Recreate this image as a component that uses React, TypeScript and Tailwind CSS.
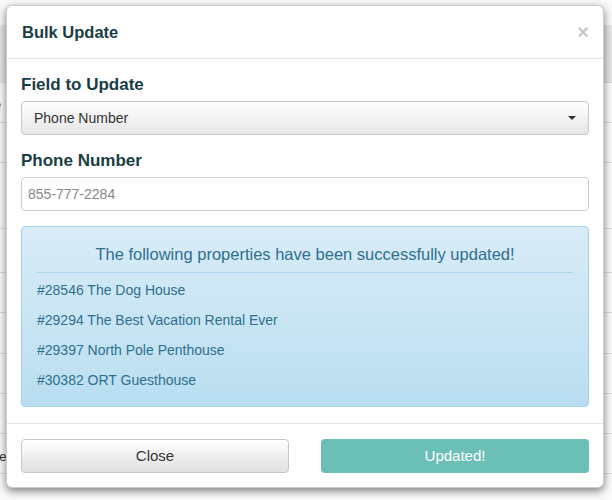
import React from "react";

const properties = [
  "#28546 The Dog House",
  "#29294 The Best Vacation Rental Ever",
  "#29397 North Pole Penthouse",
  "#30382 ORT Guesthouse",
];

const rowLines = [82, 122, 162, 228, 272, 312, 353, 393, 433, 473];

export default function App() {
  return (
    <div
      className="relative h-[500px] w-[612px] overflow-hidden bg-[#fafafa]"
      style={{ fontFamily: '"Liberation Sans", Arial, sans-serif' }}
    >
      {/* page behind the modal */}
      <div className="absolute left-0 right-0 top-[25px] h-[57px] bg-[#e6e6e6]" />
      {rowLines.map((y) => (
        <div
          key={y}
          className="absolute left-0 right-0 h-px bg-[#dcdcdc]"
          style={{ top: y }}
        />
      ))}
      <span className="absolute left-[-6px] top-[95px] text-[13px] text-[#555]">
        e
      </span>
      <span className="absolute left-[-8px] top-[447px] text-[13px] text-[#333]">
        be
      </span>

      {/* modal */}
      <div className="absolute left-[6px] top-[5px] flex h-[483px] w-[598px] flex-col rounded-[6px] border border-black/20 bg-white shadow-[0_3px_9px_rgba(0,0,0,0.5)]">
        <div className="flex h-[53px] items-center justify-between border-b border-[#e5e5e5] pl-[15px] pr-[14px]">
          <h3 className="text-[16.5px] font-bold text-[#1a3d44]">Bulk Update</h3>
          <span className="text-[20px] font-bold leading-none text-[#c8c8c8]">
            ×
          </span>
        </div>

        <div className="flex flex-col px-[14px] pt-[16px]">
          <label className="text-[17px] font-bold leading-[20px] text-[#1a3d44]">
            Field to Update
          </label>
          <div className="mt-[6px] flex h-[34px] items-center justify-between rounded-[4px] border border-[#c8c8c8] bg-gradient-to-b from-white to-[#e6e6e6] pl-[12px] pr-[12px]">
            <span className="text-[14px] text-[#333]">Phone Number</span>
            <span className="h-0 w-0 border-x-[4px] border-t-[4px] border-x-transparent border-t-[#333]" />
          </div>

          <label className="mt-[16px] text-[17px] font-bold leading-[20px] text-[#1a3d44]">
            Phone Number
          </label>
          <div className="mt-[6px] flex h-[34px] items-center rounded-[4px] border border-[#cccccc] bg-white pl-[6px]">
            <span className="text-[14px] text-[#888]">855-777-2284</span>
          </div>

          <div className="mt-[15px] flex h-[181px] flex-col rounded-[4px] border border-[#9fd3ee] bg-gradient-to-b from-[#d9ecf7] to-[#b9def0] px-[15px] pt-[16px]">
            <p className="text-center text-[16.5px] leading-[22px] text-[#2f6f8f]">
              The following properties have been successfully updated!
            </p>
            <div className="mt-[7px] h-px bg-[#a7d6ec]" />
            <ul className="mt-[7px] flex flex-col">
              {properties.map((p) => (
                <li
                  key={p}
                  className="h-[30px] text-[14px] leading-[20px] text-[#2f6f8f]"
                >
                  {p}
                </li>
              ))}
            </ul>
          </div>
        </div>

        <div className="mt-[16px] flex flex-1 items-center justify-between border-t border-[#e5e5e5] px-[14px] pt-[1px]">
          <button className="h-[34px] w-[268px] rounded-[4px] border border-[#c8c8c8] bg-gradient-to-b from-white to-[#e0e0e0] text-[15px] text-[#333]">
            Close
          </button>
          <button className="h-[34px] w-[268px] rounded-[4px] bg-[#6cbfb7] text-[15px] text-white">
            Updated!
          </button>
        </div>
      </div>
    </div>
  );
}
